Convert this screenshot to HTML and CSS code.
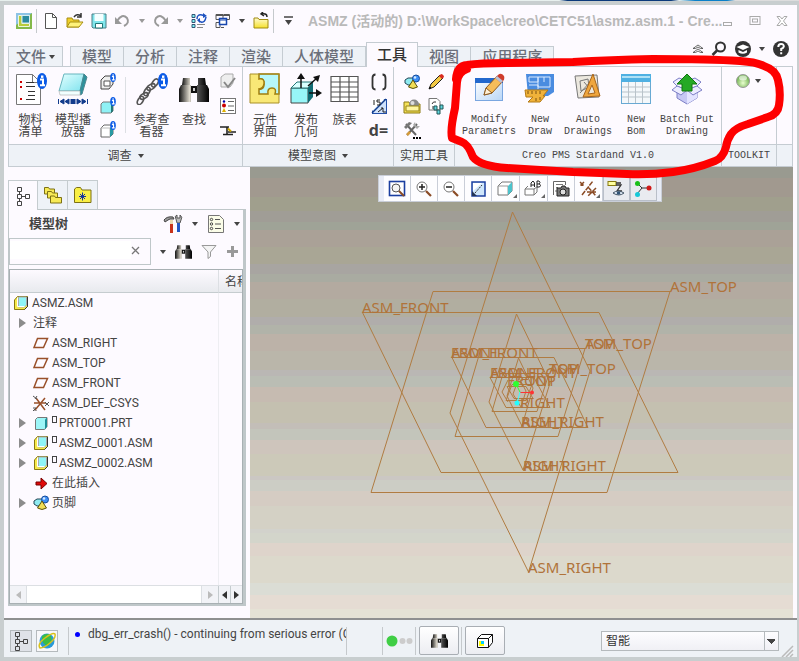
FILE: index.html
```html
<!DOCTYPE html>
<html lang="zh-CN">
<head>
<meta charset="utf-8">
<title>ASMZ (活动的)</title>
<link rel="stylesheet" href="styles.css">
</head>
<body>
<svg class="defs" aria-hidden="true">
  <defs>
    <linearGradient id="gCyan" x1="0" y1="0" x2="1" y2="1"><stop offset="0" stop-color="#e4ffff"/><stop offset="1" stop-color="#7fe3ee"/></linearGradient>
    <linearGradient id="gYellow" x1="0" y1="0" x2="0" y2="1"><stop offset="0" stop-color="#fffbd0"/><stop offset="1" stop-color="#f5e02c"/></linearGradient>
    <linearGradient id="gTube" x1="0" y1="0" x2="1" y2="0"><stop offset="0" stop-color="#111"/><stop offset=".35" stop-color="#ddd8cc"/><stop offset=".6" stop-color="#555"/><stop offset="1" stop-color="#000"/></linearGradient>
    <linearGradient id="gBlue" x1="0" y1="0" x2="1" y2="1"><stop offset="0" stop-color="#ffffff"/><stop offset="1" stop-color="#b9d6f7"/></linearGradient>
    <radialGradient id="gBall" cx=".5" cy=".65"><stop offset="0" stop-color="#eaffd0"/><stop offset="1" stop-color="#7cb95c"/></radialGradient>
    <symbol id="info" viewBox="0 0 10 16"><ellipse cx="5" cy="8" rx="5" ry="8" fill="#0a5ae6"/><path d="M3 6.500h3V12M3 12.300h5" stroke="#fff" stroke-width="2" fill="none"/><rect x="4" y="2.500" width="2.400" height="2.400" fill="#fff"/></symbol>
    <symbol id="binoc" viewBox="0 0 30 26"><path d="M4 1h7v7h-8zM19 1h7l1 7h-8z" fill="url(#gTube)"/><path d="M2 8h10v17H0V12zM18 8h10l2 4v13H18z" fill="url(#gTube)"/><path d="M12 9h6v7h-6z" fill="#111"/><path d="M14 11h2v3h-2z" fill="#ccc"/></symbol>
    <symbol id="asm" viewBox="0 0 16 16"><path d="M1.500 5l3-3.500H14.500v10l-3 3H1.500z" fill="#f6e94a" stroke="#8a7a10"/><path d="M5.500 2h8v8l-2 2h-6z" fill="#8ff4f6" stroke="#aaa"/><path d="M4.500 2.500v9h7" fill="none" stroke="#fff"/><path d="M14.500 2v9.500l-3 3" fill="none" stroke="#333"/></symbol>
    <symbol id="plane" viewBox="0 0 16 16"><path d="M4.500 3.500H14.500L10.500 12.500H1z" fill="none" stroke="#99502a" stroke-width="1.500"/></symbol>
    <symbol id="shapes" viewBox="0 0 16 16"><path d="M1 6l3-2h6v7H4L1 9z" fill="#8eeaf0" stroke="#245"/><circle cx="12" cy="4.500" r="3.500" fill="#3d8ef5" stroke="#134a9c"/><circle cx="11" cy="3.500" r="1.300" fill="#d5eaff"/><path d="M9 6l4.500 7q-4.500 3-9 0z" fill="#f1dd55" stroke="#5c5210"/></symbol>
    <symbol id="treeic" viewBox="0 0 16 20"><path d="M2.500 1.500h4v4h-4zM2.500 8.500h4v4h-4zM2.500 15.500h4v4h-4zM10.500 8.500h4v4h-4zM4.500 5.500v3M4.500 12.500v3M6.500 10.500h4" fill="none" stroke="currentColor"/></symbol>
    <symbol id="cube" viewBox="0 0 16 16"><path d="M2.500 4.500l2-2h9.500v9l-2.500 3h-9z" fill="#9cf6f8" stroke="#777"/><path d="M12 4.500l2-2v9l-2 3z" fill="#1c8f98"/></symbol>
    <symbol id="pencil" viewBox="0 0 18 18"><path d="M2 16l2-5L13 2l3 3-9 9z" fill="#f2c944" stroke="#222"/><path d="M12 3l1.500-1.500q1-1 2 0l1 1q1 1 0 2L15 6z" fill="#d92b20"/><path d="M2 16l1-2.500L4.500 15z" fill="#000"/></symbol>
  </defs>
</svg>
<div class="backdrop"></div>
<div class="window">
  <header class="titlebar">
    <button class="q" aria-label="Creo"><svg width="16" height="16"><rect width="16" height="16" fill="#84b94b"/><path d="M0 0h16L0 12z" fill="#8dc3e6"/><path d="M2.500 2.500v11h11v-3h-7.500v-8z" fill="#b9cc3a" stroke="#eef5dd"/><rect x="6" y="2.500" width="7.500" height="7.500" fill="#2b8aa0" stroke="#d5ecef"/></svg></button>
    <span class="bar"></span>
    <button class="q" aria-label="新建"><svg width="14" height="18"><path d="M1.500 1.500h7l4 4v11h-11z" fill="#fff" stroke="#555"/><path d="M8.500 1.500v4h4" fill="none" stroke="#555"/></svg></button>
    <button class="q" aria-label="打开"><svg width="18" height="16"><path d="M1 14V5h5l1 2h6v7z" fill="#f0cf2b" stroke="#a88f12"/><path d="M1 14l3-5h13l-4 5z" fill="#fff27a" stroke="#a88f12"/><path d="M8 4q3-4 7-1M15 0v4h-4" fill="none" stroke="#333" stroke-width="1.500"/></svg></button>
    <button class="q" aria-label="保存"><svg width="16" height="16"><path d="M1 1h14v14H2l-1-1z" fill="#7fe6ec" stroke="#4a7f86"/><path d="M3.500 1h9v7h-9z" fill="#f4ffff"/><path d="M4.500 10.500h7V15h-7z" fill="#fff" stroke="#277"/></svg></button>
    <button class="q" aria-label="撤消"><svg width="18" height="14"><path d="M3 7q5-8 10-3 3 5-3 8" fill="none" stroke="#999" stroke-width="2"/><path d="M1 3v7h7z" fill="#999"/></svg></button>
    <button class="q c dim" aria-label="撤消列表"><i class="caret"></i></button>
    <button class="q" aria-label="重做"><svg width="18" height="14"><path d="M14 7Q9-1 4 4q-3 5 3 8" fill="none" stroke="#999" stroke-width="2"/><path d="M16 3v7H9z" fill="#999"/></svg></button>
    <button class="q c dim" aria-label="重做列表"><i class="caret"></i></button>
    <button class="q" aria-label="重新生成"><svg width="16" height="16"><path d="M1 1.500h3v3H1zM1 6.500h3v3H1zM1 11.500h3v3H1z" fill="#7ff0f0" stroke="#357"/><path d="M6 11.500h8M6 14.500h6" stroke="#888"/><path d="M6 6q0-5 5-4l3 1M15 4q-1 6-5 5L7 7" fill="none" stroke="#1c51c0" stroke-width="1.500"/><path d="M12 0l4 3-4 2zM9 5L6 7l3 3z" fill="#1c51c0"/></svg></button>
    <button class="q" aria-label="窗口"><svg width="16" height="16"><path d="M1 1.500h7v5H1zM8.500 1.500h6v5h-3M1 9.500h4v5H1zM6 14.500h3" fill="none" stroke="#555"/><path d="M1 2.500h13" stroke="#555"/><path d="M4.500 5.500h7v6h-7z" fill="#fff" stroke="#1746b0" stroke-width="1.500"/><path d="M4.500 7h7" stroke="#1746b0"/></svg></button>
    <button class="q c" aria-label="窗口列表"><i class="caret"></i></button>
    <button class="q" aria-label="关闭"><svg width="16" height="17"><path d="M1 16V6h4l1 1.500h9V16z" fill="url(#gYellow)" stroke="#a08b10"/><path d="M14 5q0-4-5-3M10 0L8 2l3 2" fill="none" stroke="#222" stroke-width="1.500"/></svg></button>
    <span class="bar"></span>
    <button class="q" aria-label="自定义"><svg width="9" height="9"><path d="M0 1h9" stroke="#444" stroke-width="1.500"/><path d="M1 4h7L4.500 9z" fill="#444"/></svg></button>
    <h1>ASMZ (活动的) D:\WorkSpace\creo\CETC51\asmz.asm.1 - Cre...</h1>
    <div class="winbtns">
      <button aria-label="最小化"><svg width="12" height="12"><rect x="1.500" y="7.500" width="8" height="3" fill="none" stroke="#aaa"/></svg></button>
      <button aria-label="最大化"><svg width="12" height="12"><rect x="1" y="1.500" width="10" height="8" fill="none" stroke="#aaa"/><rect x="3.500" y="4" width="5" height="3" fill="none" stroke="#aaa"/></svg></button>
      <button aria-label="关闭窗口"><svg width="12" height="12"><path d="M1 1.500h3l2 2.500 2-2.500h3L7.500 6l3.500 4.500H8L6 8l-2 2.500H1L4.500 6z" fill="#fff" stroke="#aaa"/></svg></button>
    </div>
  </header>

  <nav class="tabs">
    <button class="tab file">文件<i class="caret"></i></button>
    <button class="tab">模型</button>
    <button class="tab">分析</button>
    <button class="tab">注释</button>
    <button class="tab">渲染</button>
    <button class="tab">人体模型</button>
    <button class="tab on">工具</button>
    <button class="tab">视图</button>
    <button class="tab">应用程序</button>
    <div class="help">
      <button aria-label="最小化功能区"><svg width="12" height="10"><path d="M1 4.500l5-3.500 5 3.500H8.500L6 3 3.500 4.500zM1 8.500L6 5l5 3.500H8.500L6 7 3.500 8.500z" fill="#fff" stroke="#444" stroke-width=".8"/></svg></button>
      <button aria-label="搜索"><svg width="16" height="16"><circle cx="9.500" cy="6" r="4.500" fill="none" stroke="#333" stroke-width="2"/><path d="M6 9.500L1.500 14" stroke="#333" stroke-width="2.500"/></svg></button>
      <button aria-label="学习"><svg width="18" height="18"><circle cx="9" cy="9" r="8" fill="#333"/><path d="M2.500 7l6.500-2.500L15.500 7 9 10z" fill="#fff"/><path d="M4.500 10L9 12l4-2v2.500q-4 2.500-8.500 0z" fill="#fff"/></svg></button>
      <i class="caret"></i>
      <button aria-label="帮助"><svg width="18" height="18"><circle cx="9" cy="9" r="8" fill="#333"/><path d="M6.300 7q0-3 2.800-3 2.800 0 2.700 2.500Q11.600 8 9.200 9v2M9.200 12.300v2" fill="none" stroke="#fff" stroke-width="2"/></svg></button>
    </div>
  </nav>

  <section class="ribbon">
    <div class="group">
      <div class="body g1">
        <button class="big"><svg viewBox="0 0 32 32"><path d="M1.500 1.500h16l8 8v22h-24z" fill="#fff" stroke="#777"/><path d="M17.500 1.500v8h8" fill="none" stroke="#777"/><path d="M11 9.500h8M11 13.500h9M13 18.500h7M13 22.500h7M11 26.500h9" stroke="#333"/><path d="M5 8h2v2H5zM5 13h2v2H5zM5 25h2v2H5z" fill="#c00"/><use href="#info" x="22" y="0" width="10" height="16"/></svg><span>物料<br>清单</span></button>
        <button class="big"><svg viewBox="0 0 32 32"><path d="M2 18L7 1h20l-4 17z" fill="url(#gCyan)" stroke="#66b5bd"/><path d="M23 22v-4L27 1l3 3-5 17z" fill="#2d929c" stroke="#4d8790"/><path d="M2 18h21v4H3z" fill="#f1ffff" stroke="#aaa" stroke-width=".6"/><path d="M1.500 26v5M7 26v5l-4-2.500zM12 26v5l-4-2.500zM20 26v5l4-2.500zM25 26v5l4-2.500zM30.500 26v5" fill="#123c8c" stroke="#123c8c"/><path d="M13.500 26h5v5h-5z" fill="#123c8c"/></svg><span>模型播<br>放器</span></button>
        <div class="smalls">
          <button aria-label="几何信息"><svg viewBox="0 0 18 18"><path d="M2 7l4-4h8v8l-4 5H2z" fill="#eee" stroke="#444"/><path d="M5 8h6v5H5z" fill="#fff" stroke="#555"/><use href="#info" x="11" y="0" width="6" height="9"/></svg></button>
          <button aria-label="零件信息"><svg viewBox="0 0 18 18"><path d="M2 7l2-2h10v9l-2 2H2z" fill="#8ff1f5" stroke="#777"/><path d="M12 7l2-2v9l-2 2z" fill="#277"/><use href="#info" x="11" y="0" width="6" height="9"/></svg></button>
          <button aria-label="特征信息"><svg viewBox="0 0 18 18"><path d="M2 7l3-3h9v9l-3 3H2z" fill="#fff" stroke="#666"/><path d="M2 7h9v9" fill="none" stroke="#bbb"/><path d="M11 7l3-3v9l-3 3z" fill="#279aa3"/><use href="#info" x="11" y="0" width="6" height="9"/></svg></button>
        </div>
        <span class="split"></span>
        <button class="big"><svg viewBox="0 0 32 32"><g fill="none" stroke="#555" stroke-width="1.600"><ellipse cx="4.500" cy="27.500" rx="4.500" ry="2.500" transform="rotate(-60 4.500 27.500)"/><ellipse cx="8" cy="23" rx="4.500" ry="2.500" transform="rotate(-30 8 23)"/><ellipse cx="11" cy="18.500" rx="4.500" ry="2.500" transform="rotate(-60 11 18.500)"/><ellipse cx="15" cy="14" rx="4.500" ry="2.500" transform="rotate(-30 15 14)"/><ellipse cx="19" cy="10" rx="4.500" ry="2.500" transform="rotate(-55 19 10)"/></g><use href="#info" x="22" y="0" width="10" height="16"/></svg><span>参考查<br>看器</span></button>
        <button class="big"><svg viewBox="0 0 32 32"><use href="#binoc" x="1" y="4" width="30" height="26"/></svg><span>查找</span></button>
        <div class="smalls">
          <button aria-label="检查"><svg viewBox="0 0 18 18"><path d="M2 4l4-3h8v9l-3 4H2z" fill="#eee" stroke="#aaa"/><path d="M5 9l4 5 7-9" fill="none" stroke="#888" stroke-width="2"/></svg></button>
          <button aria-label="消息日志"><svg viewBox="0 0 18 18"><rect x="1.500" y="1.500" width="15" height="15" fill="#fff" stroke="#777"/><circle cx="5" cy="4.500" r="1.200" fill="#00a"/><circle cx="5" cy="8.500" r="2" fill="#c00"/><path d="M5 11l2 4H3z" fill="#e0b000"/><path d="M9 4.500h6M9 9h6M9 13.500h6" stroke="#666"/></svg></button>
          <button aria-label="比较"><svg viewBox="0 0 18 18"><path d="M1 6h9M8 6v8M4 13.500h10M9 11h8" fill="none" stroke="#222" stroke-width="1.600"/><path d="M9 7.500l3 3" stroke="#c9a400" stroke-width="2"/></svg></button>
        </div>
      </div>
      <button class="foot">调查<i class="caret"></i></button>
    </div>
    <div class="group">
      <div class="body g2">
        <button class="big"><svg viewBox="0 0 32 32"><path d="M1 1h29v29H1z" fill="#f9e876"/><path d="M10 1h20v20h-4q2-6-3-6t-4 6h-9v-5q5 1 5-5t-5-5z" fill="#b6f7fb" stroke="#a07d10" stroke-width="1.500"/><path d="M10 6q6-1 5 5-1 5-5 5" fill="#f9e876" stroke="#a07d10" stroke-width="1.500"/><path d="M1 1h29v29H1z" fill="none" stroke="#a88f28"/></svg><span>元件<br>界面</span></button>
        <button class="big"><svg viewBox="0 0 32 32"><path d="M1 15h17v15H1z" fill="#97f6f8" stroke="#444"/><path d="M1 15l6-6h16l-5 6z" fill="#d9ffff" stroke="#277"/><path d="M18 15l5-6v15l-5 6z" fill="#116c74"/><path d="M11 15V3M18 13l9-8M19 20h10" stroke="#111" stroke-width="1.500"/><path d="M11 0l4 6H7zM30 2l-2 7-5-5zM32 20l-6-4v8z" fill="#111"/></svg><span>发布<br>几何</span></button>
        <button class="big"><svg viewBox="0 0 32 32"><rect x="2" y="3" width="27" height="26" fill="#fff"/><path d="M2 3.500h27v25H2zM2 9h27M2 14h27M2 19h27M2 24h27M11 3v25M20 3v25" fill="none" stroke="#555" stroke-width="1.200"/></svg><span>族表</span></button>
        <div class="smalls">
          <button aria-label="参数"><svg viewBox="0 0 18 18"><path d="M5.500 1.500Q2.500 1.500 2.500 5v8q0 3.500 3 3.500M12.500 1.500q3 0 3 3.500v8q0 3.500-3 3.500" fill="none" stroke="#333" stroke-width="1.800"/></svg></button>
          <button aria-label="切换符号"><svg viewBox="0 0 18 18"><rect x="2.500" y="2.500" width="14" height="14" fill="#cfe2fb" stroke="#2350a8"/><path d="M2 1.500h13L2 14z" fill="#fff"/><path d="M2 16L16 2" stroke="#123c8c" stroke-width="1.500"/><path d="M4 3v5M7 3h3M7 3v2h3v3H7M8 15l5-4M11 11h2v4h3" fill="none" stroke="#222"/></svg></button>
          <button class="rel">d=</button>
        </div>
      </div>
      <button class="foot">模型意图<i class="caret"></i></button>
    </div>
    <div class="group">
      <div class="body g3">
        <div class="smalls">
          <button aria-label="图像编辑器"><svg viewBox="0 0 18 18"><use href="#shapes" x="1" y="1" width="16" height="16"/></svg></button>
          <button aria-label="外观库"><svg viewBox="0 0 18 18"><path d="M1 16V5h5l1 2h10v9z" fill="#f5e25a" stroke="#8d7a12"/><circle cx="11" cy="7.500" r="5" fill="#8a8a8a"/><circle cx="9.500" cy="6" r="2" fill="#ddd"/><path d="M3 9h13v5H3z" fill="#fff6a0" stroke="#998615"/></svg></button>
          <button aria-label="辅助应用程序"><svg viewBox="0 0 18 18"><path d="M3 3l10 11M14 3L4 14" stroke="#666" stroke-width="2"/><path d="M1 6l5-5 3 1-6 6z" fill="#777"/><path d="M12 1l1 4 4 0-3 3-4-4z" fill="#aaa"/><path d="M4 14l3-3" stroke="#d39a3a" stroke-width="2.500"/><path d="M10 16h2v2h-2zM13 16h2v2h-2zM16 16h2v2h-2z" fill="#000"/></svg></button>
        </div>
        <div class="smalls">
          <button aria-label="编辑"><svg viewBox="0 0 18 18"><use href="#pencil" width="18" height="18"/></svg></button>
          <button aria-label="导出"><svg viewBox="0 0 18 18"><path d="M2 1.500h8l3 3V13H2z" fill="#fff" stroke="#777"/><path d="M5 7q1-3 4-2M6 9v3" fill="none" stroke="#333"/><path d="M7 9h3v4H7zM13 8h3v4h-3zM10 13h3v4h-3z" fill="#5fd7df" stroke="#255"/></svg></button>
        </div>
      </div>
      <button class="foot">实用工具</button>
    </div>
    <div class="group pms">
      <div class="body g4">
        <button class="big"><svg viewBox="0 0 32 32"><rect x="2.500" y="5.500" width="27" height="22" fill="url(#gBlue)" stroke="#7aa6e0"/><path d="M2 5h28v5H2z" fill="#2368cd"/><path d="M11 22l2-7L24 3l6 5-11 12z" fill="#f6bd5a" stroke="#8d5a20"/><path d="M11 22l2-7 6 5z" fill="#fff0d5" stroke="#8d5a20"/><path d="M22 5l3-3q3-3 6 1 1 3-1 5l-2 2z" fill="#cf3c2c"/><path d="M22 5l2-2 6 5-2 2z" fill="#b8c2d6"/></svg><span>Modify<br>Parametrs</span></button>
        <button class="big"><svg viewBox="0 0 32 32"><path d="M2 1h28v18l-6 4H4z" fill="#4a8ce0"/><path d="M5 4h9v5H5zM14 4h12v10H14zM5 12h9v4M20 4v5" fill="none" stroke="#d8e9ff"/><path d="M1 17h23l-5 6h2l-5 6H4l5-5H2z" fill="#f0b23a" stroke="#b47a15"/><path d="M4 18v3M8 18v3M12 18v3M16 18v3M12 25v3M16 24v3" stroke="#7d5310"/></svg><span>New<br>Draw</span></button>
        <button class="big"><svg viewBox="0 0 32 32"><path d="M3 3l22-1 2 22-21 1z" fill="#ece8df" stroke="#777"/><path d="M8 8l8-2 1 8-8 4zM8 20l12-13M12 9l6 7" fill="none" stroke="#777"/><path d="M21 1l7 22-17 1z" fill="#efa63e" stroke="#a8651b"/><path d="M20 12l3 8-7 1z" fill="#ece8df" stroke="#a8651b"/></svg><span>Auto<br>Drawings</span></button>
        <button class="big"><svg viewBox="0 0 32 32"><rect x="1.500" y="1.500" width="29" height="29" fill="#f4f8fb" stroke="#68a9d3"/><path d="M1 1h30v8H1z" fill="#4fb0e2"/><path d="M2 4h28" stroke="#aee0f5" stroke-width="2"/><path d="M2 14h28M2 19h28M2 24h28M8.500 9v21M15.500 9v21M22.500 9v21" stroke="#b9c3ca"/></svg><span>New<br>Bom</span></button>
        <button class="big"><svg viewBox="0 0 32 32"><path d="M6 13l10 4 10-4v12l-10 6-10-6z" fill="#c7c8f4" stroke="#7d7fc6"/><path d="M16 17v14l10-6V13z" fill="#e3e4ff"/><path d="M6 13L1 17l9 5 6-5zM26 13l5 4-9 5-6-5zM6 13L2 9l6-4 8 3-6 3M26 13l4-4-6-4-8 3" fill="#ececff" stroke="#7d7fc6"/><path d="M16 1l10 10h-5v7H11v-7H6z" fill="#25a925" stroke="#11770f"/></svg><span>Batch Put<br>Drawing</span></button>
      </div>
      <div class="foot">Creo PMS Stardand V1.0</div>
    </div>
    <div class="group toolkit">
      <div class="body g5">
        <button aria-label="状态"><svg width="16" height="16"><circle cx="8" cy="8" r="6.500" fill="url(#gBall)" stroke="#9a9a9a"/><ellipse cx="8" cy="5" rx="4" ry="2.500" fill="#fff" opacity=".6"/></svg></button>
        <i class="caret"></i>
      </div>
      <div class="foot">TOOLKIT</div>
    </div>
    <div class="group rest"><div class="body"></div><div class="foot"></div></div>
  </section>
  <svg class="marker" width="350" height="130" viewBox="444 50 350 130" aria-hidden="true"><path d="M456 79Q457 66 467 65Q480 63 507 63L573 62Q610 60 653 59Q710 59 740 61Q756 62 764 66Q776 70 778 80Q781 92 779 105Q778 114 768 117L748 124Q735 128 731 134Q727 140 726 147Q723 158 715 161Q695 169 673 172Q650 175 627 174L573 172L507 168Q480 166 473 157Q468 144 462 142L452 138Q450 130 455 108L457 82Q458 72 467 69" fill="none" stroke="#fe0000" stroke-width="8" stroke-linecap="round" stroke-linejoin="round"/></svg>

  <main>
    <aside>
      <div class="ptabs">
        <button class="on" aria-label="模型树"><svg width="16" height="20"><use href="#treeic" width="16" height="20"/></svg></button>
        <button aria-label="文件夹浏览器"><svg width="20" height="20"><g fill="#f7ea55" stroke="#7d7115"><path d="M1.500 9V2.500h4l1 1.500h5v5z"/><path d="M4.500 13V6.500h4l1 1.500h5v5z"/><path d="M7.500 18v-7h4l1 1.500h6V18z"/></g></svg></button>
        <button aria-label="收藏夹"><svg width="20" height="18"><path d="M1.500 16.500V3l2-1.500h4L9 4h9v12.500z" fill="#f9ef45" stroke="#7d7115"/><path d="M9.500 6.500v8M6 10.500h7M7 8l5 5M12 8l-5 5" stroke="#14329c"/></svg></button>
      </div>
      <div class="panel">
        <div class="phead">
          <h2>模型树</h2>
          <button class="t" aria-label="设置"><svg width="20" height="20"><path d="M1 6q3-4 9-3l1 2H7L5 6 2 8z" fill="#999" stroke="#444"/><path d="M7 6h3v6H7z" fill="#e8d9b0"/><path d="M7 10h3v9H7z" fill="#c8321a"/><path d="M13 5q-2-3 1-4v3h3V1q3 2 1 5l-1 3h-3z" fill="#bbb" stroke="#555"/><path d="M14 9h3v9h-3z" fill="#2257c4"/></svg></button>
          <i class="caret"></i>
          <button class="t" aria-label="显示"><svg width="18" height="20"><path d="M1.500 1.500h11l4 4v13h-15z" fill="#fbfde8" stroke="#777"/><path d="M8 5.500h5M8 10h6M8 14.500h6" stroke="#555"/><circle cx="4.500" cy="5.500" r="1.200" fill="none" stroke="#444"/><circle cx="4.500" cy="10" r="1.200" fill="none" stroke="#444"/><circle cx="4.500" cy="14.500" r="1.200" fill="none" stroke="#444"/></svg></button>
          <i class="caret"></i>
        </div>
        <div class="psearch">
          <div class="box"><input type="text" aria-label="搜索模型树"><button aria-label="清除"><svg width="9" height="9"><path d="M1 1l7 7M8 1L1 8" stroke="#777" stroke-width="1.300"/></svg></button></div>
          <i class="caret"></i>
          <button class="t" aria-label="查找"><svg width="17" height="16"><use href="#binoc" width="17" height="16"/></svg></button>
          <button class="t" aria-label="过滤"><svg width="16" height="16"><path d="M1 1.500h14L9.500 8v4.500L7 14.500V8z" fill="#f4f4f4" stroke="#999"/></svg></button>
          <button class="t" aria-label="添加"><svg width="13" height="13"><path d="M6.500 1v11M1 6.500h11" stroke="#999" stroke-width="3"/></svg></button>
        </div>
        <div class="tree">
          <div class="th"></div><div class="th name">名称</div>
          <ul>
            <li class="root"><svg><use href="#asm"/></svg>ASMZ.ASM</li>
            <li><b class="arrow"></b>注释</li>
            <li><b></b><svg><use href="#plane"/></svg>ASM_RIGHT</li>
            <li><b></b><svg><use href="#plane"/></svg>ASM_TOP</li>
            <li><b></b><svg><use href="#plane"/></svg>ASM_FRONT</li>
            <li><b></b><svg viewBox="0 0 16 16"><path d="M1 8h12M2 15L12 3M3 3l9 12M8 1" fill="none" stroke="#99502a" stroke-width="1.500"/><path d="M0 1l4 3M4 1L2 4M12 7l4 4M16 7l-4 4M0 13h3l-3 3h4" fill="none" stroke="#555"/></svg>ASM_DEF_CSYS</li>
            <li><b class="arrow"></b><svg><use href="#cube"/></svg><i class="mk"></i>PRT0001.PRT</li>
            <li><b class="arrow"></b><svg><use href="#asm"/></svg><i class="mk"></i>ASMZ_0001.ASM</li>
            <li><b class="arrow"></b><svg><use href="#asm"/></svg><i class="mk"></i>ASMZ_0002.ASM</li>
            <li><b></b><svg viewBox="0 0 16 16"><path d="M3 7h5V3l6 5.500L8 14v-4H3z" fill="#e00808" stroke="#700"/></svg>在此插入</li>
            <li><b class="arrow"></b><svg><use href="#shapes"/></svg>页脚</li>
          </ul>
          <div class="col2"></div>
          <div class="hscroll"><button class="l" aria-label="向左滚动"></button><span></span><button class="r" aria-label="向右滚动"></button></div>
          <div class="hscroll dark"><button class="l" aria-label="左列"></button><button class="r" aria-label="右列"></button></div>
        </div>
      </div>
    </aside>
    <div class="stage">
      <svg class="model" viewBox="250 167 543 451" preserveAspectRatio="xMidYMid meet">
        <g fill="none" stroke="#b07c42">
          <path d="M512.500 212L590 371 528.500 572 450 413z"/>
          <path d="M433 291.500H670L607 492.500H371z"/>
          <path d="M362.500 312.500H599L678 472.500H441z"/>
          <path d="M516.500 314L550 383 523 470 489 402z"/>
          <path d="M481 348.500H585L558 436.500H455z"/>
          <path d="M452 357.500H554L588 427.500H486z"/>
          <path d="M518.500 358L533 388 522 426 507 396z"/>
          <path d="M503 373.500H549L537 411.500H492z"/>
          <path d="M490 377.500H534L550 407.500H506z"/>
          <path d="M519 378L526 391 521 407 513 394zM512 384.500H532L526 400.500H506zM507 386.500H526L533 398.500H514zM508 380L502 392 508 402"/>
        </g>
        <g class="dl">
          <text x="670" y="292">ASM_TOP</text>
          <text x="362" y="313">ASM_FRONT</text>
          <text x="585" y="349">ASM_TOP</text><text x="585" y="349">TOP</text>
          <text x="451" y="358">ASM_FRONT</text><text x="451" y="358">FRONT</text>
          <text x="549" y="374">ASM_TOP</text><text x="549" y="374">TOP</text>
          <text x="490" y="378">ASM_FRONT</text><text x="490" y="378">FRONT</text>
          <text x="507" y="386">FRONT</text><text x="527" y="386">TOP</text>
          <text x="520" y="408">RIGHT</text>
          <text x="521" y="427">ASM_RIGHT</text><text x="521" y="427">RIGHT</text>
          <text x="523" y="471">ASM_RIGHT</text><text x="523" y="471">RIGHT</text>
          <text x="528" y="573">ASM_RIGHT</text>
        </g>
        <path d="M516 384L520 392" stroke="#3f3"/><path d="M520 392.500H532" stroke="#f33"/><path d="M520 392L517 403" stroke="#3ff"/>
        <circle cx="516" cy="384" r="3" fill="#2fff2f"/><circle cx="532" cy="392.500" r="2" fill="#f33"/><circle cx="517" cy="403" r="2.500" fill="#2ff"/>
      </svg>
      <div class="viewbar">
        <button aria-label="重新调整"><svg viewBox="0 0 18 18"><rect x="1.500" y="1.500" width="15" height="14" fill="#fff" stroke="#1b3fa0" stroke-width="1.600"/><circle cx="8" cy="8" r="4" fill="#f4f4f4" stroke="#555"/><path d="M11 11l5 5" stroke="#8a4b25" stroke-width="2"/></svg></button>
        <button aria-label="放大"><svg viewBox="0 0 18 18"><circle cx="7" cy="7" r="5" fill="#fff" stroke="#777"/><path d="M4 7h6M7 4v6" stroke="#222" stroke-width="1.500"/><path d="M11 11l5 5" stroke="#8a4b25" stroke-width="2.200"/></svg></button>
        <button aria-label="缩小"><svg viewBox="0 0 18 18"><circle cx="7" cy="7" r="5" fill="#fff" stroke="#777"/><path d="M4 7h6" stroke="#222" stroke-width="1.500"/><path d="M11 11l5 5" stroke="#8a4b25" stroke-width="2.200"/></svg></button>
        <button aria-label="重画"><svg viewBox="0 0 18 18"><rect x="3" y="2" width="13" height="14" fill="#cfe6fb" stroke="#1b3fa0" stroke-width="1.500"/><path d="M4 3h9L4 11z" fill="#fff"/><path d="M6 13L13 5" stroke="#333" stroke-width="1" stroke-dasharray="2 1"/><path d="M3 11l5 5H3z" fill="#235"/></svg></button>
        <button class="more" aria-label="显示样式"><svg viewBox="0 0 18 18"><path d="M2 6l4-4h10v9l-4 4H2z" fill="#fff" stroke="#777"/><path d="M2 6h10v9" fill="none" stroke="#999"/><path d="M12 6l4-4v9l-4 4z" fill="#4bc3cc"/></svg></button>
        <button class="more" aria-label="已保存方向"><svg viewBox="0 0 18 18"><path d="M1 9l3-3M1 9h9v6H1zM10 9l3-2v5l-3 3" fill="#fff" stroke="#777"/><path d="M7 7V3l2-2 1.500 2v4M7 5h3.500M13 1v6h2.500q2-1.500 0-3H13M13 1h2q2 1.500 0 3" fill="none" stroke="#222"/></svg></button>
        <button aria-label="视图管理器"><svg viewBox="0 0 18 18"><path d="M1.500 15V1.500h12V5" fill="#fff" stroke="#666"/><path d="M4 4.500h7M4 7.500h2M3 11h2" stroke="#777"/><path d="M5 8h4l1-2h3l1 2h3v8H5z" fill="#777" stroke="#222"/><circle cx="11" cy="12" r="3" fill="#ddd" stroke="#222"/></svg></button>
        <button class="more" aria-label="基准显示"><svg viewBox="0 0 18 18"><path d="M1 2l4 4M5 2L1 6M3 15L14 1M9 7l8 9M17 8l-8 8M8 12h9" fill="none" stroke="#8a4b25" stroke-width="1.500" stroke-dasharray="5 1"/></svg></button>
        <button class="on" aria-label="注释显示"><svg viewBox="0 0 18 18"><rect x="1" y="1.500" width="8" height="4" fill="#ffffa0" stroke="#887a10"/><path d="M9 3h5M9 5h5l-4 6h5" fill="none" stroke="#333" stroke-width="1.300"/><path d="M6 13q5-4 11 0-5 4-11 0z" fill="#dfe9f5" stroke="#456"/><circle cx="11.500" cy="13" r="1.800" fill="#357"/></svg></button>
        <button class="on" aria-label="旋转中心"><svg viewBox="0 0 18 18"><path d="M3 3l5 5-5 6M8 8h7" fill="none" stroke="#333"/><circle cx="3.500" cy="3.500" r="2.500" fill="#18c018"/><circle cx="15" cy="8" r="2.500" fill="#d01818"/><circle cx="3.500" cy="14.500" r="2.500" fill="#18c8d8"/></svg></button>
      </div>
    </div>
  </main>

  <footer>
    <button class="sq on" aria-label="导航器"><svg width="16" height="20"><use href="#treeic" width="16" height="20"/></svg></button>
    <button class="sq" aria-label="浏览器"><svg width="20" height="20"><circle cx="10" cy="10" r="7.500" fill="#2a9ad8"/><path d="M5 5q5-4 9 0 2 5-3 10-7-2-6-10z" fill="#3bbd45"/><path d="M3 17Q0 13 8 7t10-4q1 4-5 9T3 17z" fill="none" stroke="#d9c21a" stroke-width="1.500"/></svg></button>
    <span class="bar"></span>
    <i class="bullet"></i>
    <output>dbg_err_crash() - continuing from serious error (C</output>
    <span class="bar"></span><span class="gap"></span><span class="bar"></span>
    <svg class="dots" width="27" height="14"><circle cx="6" cy="7" r="5.500" fill="#3fce45"/><circle cx="16.500" cy="7" r="3" fill="#ccc"/><circle cx="23.500" cy="7" r="3" fill="#ccc"/></svg>
    <span class="bar"></span>
    <button class="wide" aria-label="查找"><svg width="17" height="16"><use href="#binoc" width="17" height="16"/></svg></button>
    <span class="bar"></span>
    <button class="wide" aria-label="选择"><svg width="18" height="18"><path d="M1.500 6.500l4-4h11v8l-4 5h-11zM1.500 6.500h11v9M12.500 6.500l4-4" fill="#fff" stroke="#111"/><path d="M3 9h5v5H3z" fill="#ff0"/><path d="M5 9h3v3H5z" fill="#0cf"/></svg></button>
    <span class="fill"></span>
    <select aria-label="选择过滤器"><option>智能</option></select>
    <svg class="grip" width="13" height="13"><path d="M1 13L12 2M5 13l7-7M9 13l3-3" stroke="#bbb" stroke-width="1.500"/></svg>
  </footer>
</div>
</body>
</html>
```
FILE: styles.css
```css
* { box-sizing: border-box; }
body {
  margin: 0;
  min-height: 100vh;
  display: flex;
  flex-direction: column;
  background: #e8ecec;
  font: 12px/12px Roboto, "Noto Sans CJK SC", sans-serif;
  color: #444;
}
.defs { position: absolute; width: 0; height: 0; }
button {
  margin: 0;
  padding: 0;
  border: 0;
  background: none;
  font: inherit;
  color: inherit;
  display: flex;
  align-items: center;
  justify-content: center;
}
svg { display: block; flex: none; }
h1, h2, ul { margin: 0; padding: 0; font-weight: 400; }
.caret {
  flex: none;
  width: 0;
  height: 0;
  border: 3px solid transparent;
  border-top: 4px solid #444;
  border-bottom: 0;
}
.dim .caret { border-top-color: #999; }
.bar { flex: none; width: 1px; background: #c5c9cc; }

.backdrop {
  height: 1px;
  background: linear-gradient(90deg, #e8f0ee 70%, #0c3a7a 71%, #0c3a7a 84%, #e8f0ee 85%, #0a80c8 87%, #0a80c8 91%, #ddd 92%);
}
.window {
  position: relative;
  flex: 1;
  display: flex;
  flex-direction: column;
  border: 4px solid #c8cecf;
  border-right-width: 2px;
  background: #fdfaff;
}

.titlebar { display: flex; height: 37px; padding: 3px 4px 9px 8px; align-items: center; }
.titlebar .bar { height: 24px; margin-right: 2px; }
.q { flex: none; width: 24px; height: 24px; }
.q.c { width: 14px; }
.titlebar h1 {
  flex: 1;
  margin-left: 8px;
  font: bold 14px/20px "Liberation Sans", "Noto Sans CJK SC", sans-serif;
  color: #b9b9b9;
  white-space: nowrap;
}
.winbtns { display: flex; gap: 15px; margin-right: 5px; }

.tabs { display: flex; align-items: flex-end; height: 24px; padding: 0 4px; }
.tab {
  height: 20px;
  padding: 0 11px;
  border: 1px solid #c5ccd2;
  border-width: 1px 1px 0 0;
  background: #eef2f7;
  font-size: 15px;
  font-weight: 500;
  color: #6b6f7a;
  white-space: nowrap;
}
.tab.file { padding: 0 7px; gap: 3px; margin-right: 7px; border-left-width: 1px; }
.tab.file + .tab { border-left-width: 1px; }
.tab.on {
  position: relative;
  height: 25px;
  padding: 0 10px;
  margin-bottom: -1px;
  border-left-width: 1px;
  background: #fdfaff;
  color: #333;
}
.help { flex: 1; display: flex; align-items: center; justify-content: flex-end; gap: 7px; padding: 0 3px 10px 0; height: 24px; }

.ribbon {
  display: flex;
  margin: 0 4px;
  border: 1px solid #c5ccd2;
}
.group { display: flex; flex-direction: column; border-left: 1px solid #c5ccd2; }
.group:first-child { border-left: 0; }
.rest { flex: 1; }
.body { display: grid; height: 77px; justify-content: center; }
.foot {
  height: 22px;
  border-top: 1px solid #c5ccd2;
  background: #eef2f7;
  display: flex;
  align-items: center;
  justify-content: center;
  gap: 6px;
  white-space: nowrap;
}
.g1 { grid-template-columns: 43px 42px 28px 6px 47px 38px 29px; }
.g2 { grid-template-columns: 44px 38px 39px 29px; }
.g3 { grid-template-columns: 24px 24px; padding: 0 6px; }
.g4 { grid-template-columns: 62px 40px 56px 40px 62px; padding: 0 3px; }
.g5 { grid-template-columns: 24px 12px; align-content: start; align-items: center; padding: 6px 9px; }
.big { flex-direction: column; justify-content: flex-start; padding-top: 6px; gap: 9px; }
.big svg { width: 32px; height: 32px; }
.smalls { display: flex; flex-direction: column; align-items: center; padding-top: 3px; }
.smalls button { width: 24px; height: 24px; }
.smalls svg { width: 18px; height: 18px; }
.rel { font: bold 16px/20px "Open Sans", sans-serif; }
.split { width: 1px; height: 56px; margin: 10px 0 0 3px; background: #dcdfe3; }
.pms, .toolkit { font-family: "Liberation Mono", monospace; font-size: 10px; }
.marker { position: absolute; left: 440px; top: 45px; z-index: 3; pointer-events: none; }

main { flex: 1; display: flex; padding-right: 4px; }
aside { flex: none; width: 246px; display: flex; flex-direction: column; padding: 13px 4px 12px; }
.ptabs { display: flex; }
.ptabs button {
  width: 30px;
  height: 29px;
  border: 1px solid #c5cccf;
  border-width: 1px 1px 0 0;
  background: #eef2f7;
}
.ptabs .on { position: relative; border-left-width: 1px; margin-bottom: -1px; height: 30px; background: #fdfaff; z-index: 1; }
.panel {
  flex: 1;
  display: flex;
  flex-direction: column;
  border: 1px solid #bfc7c9;
  border-right-width: 3px;
  border-bottom-width: 2px;
}
.phead { display: flex; align-items: center; height: 28px; padding-right: 3px; gap: 9px; }
.phead h2 { flex: 1; padding-left: 20px; font-size: 13px; font-weight: 700; }
.t { flex: none; }
.psearch { display: flex; align-items: center; gap: 9px; padding-right: 4px; height: 27px; }
.psearch .box { flex: 1; min-width: 0; display: flex; height: 27px; border: 1px solid #bfc7c9; padding: 0 10px 3px 0; align-items: center; }
.psearch input { flex: 1; min-width: 0; height: 18px; border: 0; background: #fff; font: inherit; }
.tree {
  flex: 1;
  display: grid;
  grid-template: 23px 1fr 18px / 1fr 24px;
  margin-top: 4px;
  border: 1px solid #a8b0b3;
}
.th { border-bottom: 1px solid #c5cccf; background: linear-gradient(#fdfaff, #e8eaee); }
.name { border-left: 1px solid #dcdfe3; padding: 6px 0 0 6px; overflow: hidden; white-space: nowrap; }
.col2 { border-left: 1px solid #eeeef2; }
.tree ul { list-style: none; }
.tree li { display: flex; align-items: center; height: 20px; padding-left: 8px; white-space: nowrap; }
.tree li.root { padding-left: 3px; }
.tree li svg { width: 16px; height: 16px; margin-right: 3px; }
.tree li b { width: 15px; }
.tree li b.arrow::before {
  content: "";
  display: block;
  width: 0;
  height: 0;
  border: 5px solid transparent;
  border-left: 7px solid #8c8c8c;
  border-right: 0;
  margin-left: 1px;
}
.mk { width: 5px; height: 7px; border: 1px solid #444; margin: -8px 2px 0 0; }
.hscroll { display: flex; border-top: 1px solid #dcdfe3; }
.hscroll span { flex: 1; background: #fff; border: 1px solid #dcdfe3; border-width: 0 1px; }
.hscroll button { flex: 0 0 16px; background: #f2f3f7; color: #bbb; }
.hscroll.dark button { flex: 1; border-left: 1px solid #c5cccf; color: #333; }
.l::before, .r::before { content: ""; width: 0; height: 0; border: 4px solid transparent; }
.l::before { border-left: 0; border-right: 5px solid currentColor; }
.r::before { border-right: 0; border-left: 5px solid currentColor; }

.stage {
  position: relative;
  flex: 1;
  min-width: 0;
  background: linear-gradient(
    #999a90 0 11px, #a1998f 0 30px, #a09f8d 0 44px, #a09d96 0 55px,
    #9fa397 0 63px, #aaa197 0 80px, #a9a695 0 97px, #a8a5a1 0 107px,
    #a9aba1 0 115px, #b3aaa0 0 132px, #b1aea0 0 150px, #b0adab 0 158px,
    #b1b3a9 0 167px, #bcb2a8 0 184px, #bab6aa 0 203px, #bab7b4 0 209px,
    #babdb4 0 220px, #c6bbb1 0 235px, #c4c0b0 0 256px, #c3beb8 0 262px,
    #c3c5bb 0 273px, #cec5bc 0 287px, #ccc9b9 0 309px, #cbc7c3 0 313px,
    #cccdc5 0 324px, #d5ccc3 0 339px, #d4d1c5 0 362px, #d2d2cc 0 366px,
    #d3d5cb 0 376px, #ded4cb 0 389px, #dcd9cc 0 416px, #dbddd5 0 428px,
    #e5dcd3 0 442px, #e5e2d5 0);
}
.model { width: 100%; height: 100%; position: absolute; }
.dl { font: 15px "Noto Sans", sans-serif; fill: #b0733a; }
.viewbar {
  position: absolute;
  left: 50%;
  top: 8px;
  margin-left: -144px;
  display: flex;
  padding: 0 4px 0 5px;
  background: #e8ecf6;
  border: 1px solid #c9ced8;
}
.viewbar button { position: relative; width: 27px; height: 25px; background: #fdfdff; border-right: 1px solid #c9ced8; }
.viewbar .more { width: 28px; }
.viewbar svg { width: 18px; height: 18px; }
.viewbar .on { background: #e9ebf0; border: 1px solid #b9bfc9; }
.more::after {
  content: "";
  position: absolute;
  right: 2px;
  bottom: 3px;
  border: 2px solid #666;
  border-top-color: transparent;
  border-left-color: transparent;
}

footer {
  display: flex;
  align-items: center;
  height: 39px;
  padding: 4px 3px 0 6px;
  border-top: 2px solid #8f9090;
  background: #eef2f6;
}
footer .bar { height: 28px; }
.sq { flex: none; width: 22px; height: 22px; margin-right: 4px; border: 1px solid #b5babd; background: #f8f8fa; }
.sq.on { background: #dfe2e8; }
.sq + .bar { margin-left: 6px; }
.bullet { width: 5px; height: 5px; border-radius: 50%; background: #00f; margin: -12px 8px 0 6px; }
footer output { width: 258px; align-self: flex-start; line-height: 20px; white-space: nowrap; overflow: hidden; }
.gap { width: 35px; }
.dots { margin: 0 2px 0 3px; }
.wide { flex: none; width: 40px; height: 29px; margin: 0 2px 0 3px; border: 1px solid #a9aeb4; border-radius: 2px; background: linear-gradient(#fff, #ecedf2); }
.fill { flex: 1; }
select {
  appearance: none;
  width: 178px;
  height: 20px;
  padding: 0 4px;
  border: 1px solid #b5babd;
  border-radius: 0;
  font: inherit;
  color: #333;
  background:
    conic-gradient(from -45deg at 50% 100%, #444 90deg, transparent 0) right 3px top 7px / 8px 5px no-repeat,
    linear-gradient(#b5babd, #b5babd) right 13px top / 1px 100% no-repeat,
    linear-gradient(#fdfdff, #f0f0f5);
}
.grip { align-self: flex-end; margin-left: 2px; }
```
